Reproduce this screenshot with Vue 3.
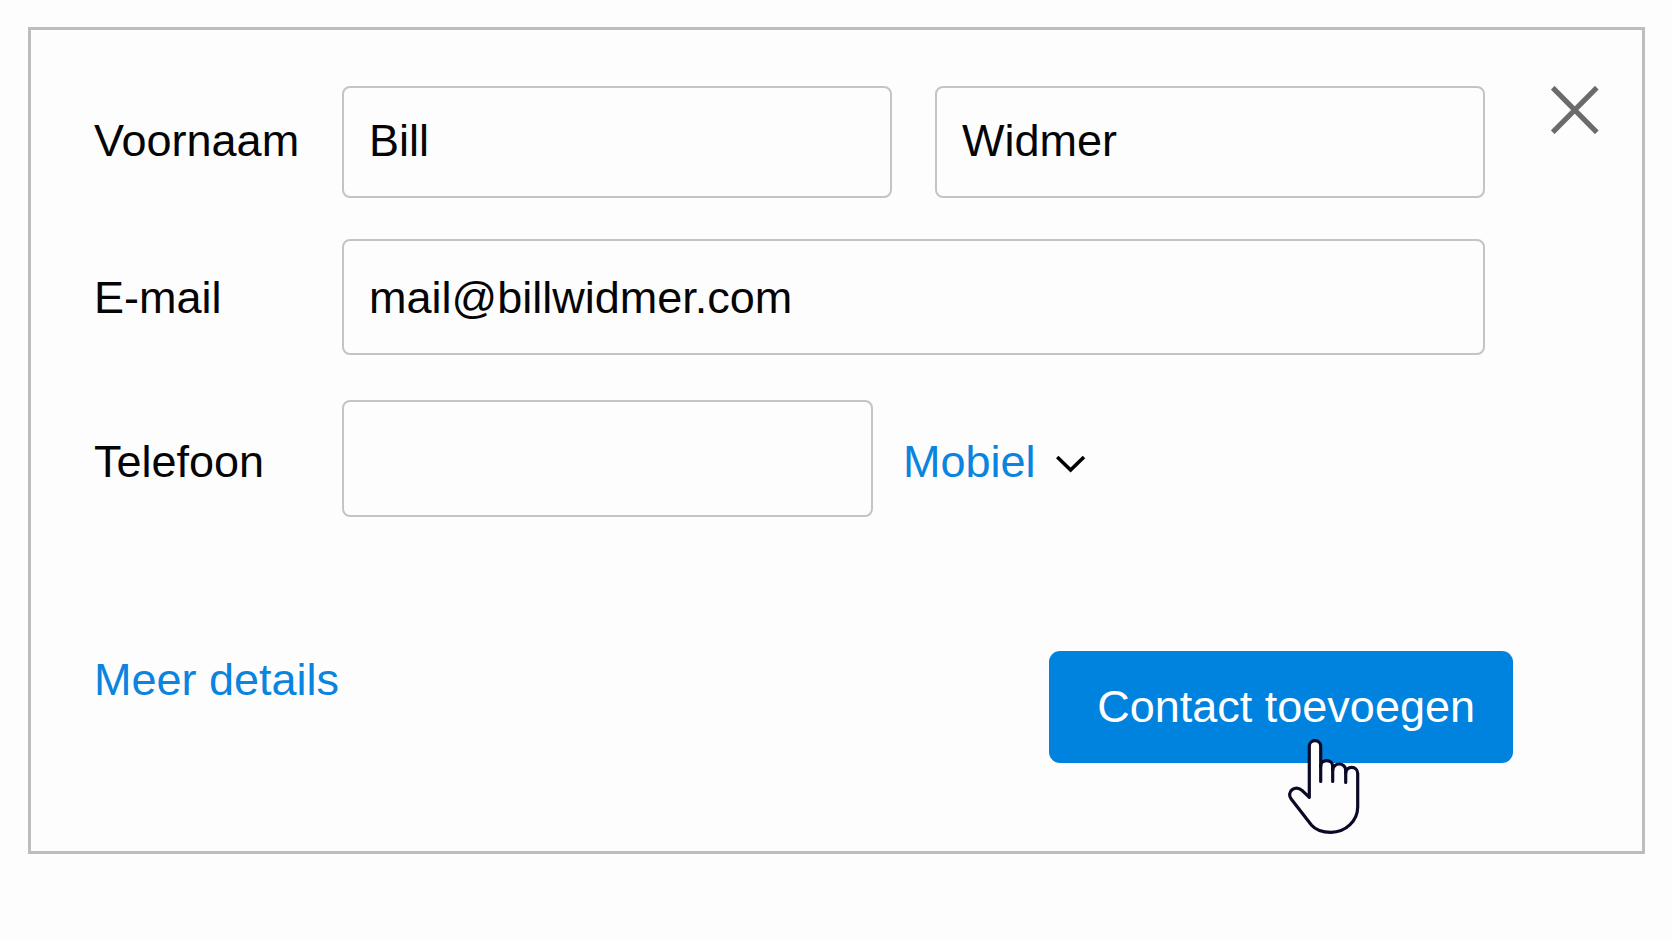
<script setup>
import { ref } from 'vue'

const firstName = ref('Bill')
const lastName = ref('Widmer')
const email = ref('mail@billwidmer.com')
const phone = ref('')
const phoneType = ref('mobiel')
</script>

<template>
  <main class="page">
    <section class="card">
      <form class="form" @submit.prevent>
        <div class="row row-name">
          <label class="label" for="first-name">Voornaam</label>
          <div class="fields">
            <input id="first-name" v-model="firstName" class="input" type="text" />
            <input v-model="lastName" class="input" type="text" aria-label="Achternaam" />
          </div>
        </div>

        <div class="row row-email">
          <label class="label" for="email">E-mail</label>
          <div class="fields">
            <input id="email" v-model="email" class="input" type="email" />
          </div>
        </div>

        <div class="row row-phone">
          <label class="label" for="phone">Telefoon</label>
          <div class="fields">
            <input id="phone" v-model="phone" class="input phone" type="tel" />
            <div class="type">
              <select v-model="phoneType" class="select" aria-label="Type telefoon">
                <option value="mobiel">Mobiel</option>
              </select>
              <svg class="chevron" width="30" height="22" viewBox="0 0 30 22" aria-hidden="true">
                <path d="M1.2 6 L14.6 19 L28 6" fill="none" stroke="#000" stroke-width="3.6" />
              </svg>
            </div>
          </div>
        </div>

        <footer class="footer">
          <a class="more" href="#">Meer details</a>
          <div class="action">
            <button class="submit" type="submit">Contact toevoegen</button>
            <svg class="hand" width="74" height="98" viewBox="0 0 74 98" aria-hidden="true">
              <path
                d="M22.3 59.3 V8.4 A5.7 5.7 0 0 1 33.7 8.4 V28.5 C33.7 25 36.5 22.7 39.7 22.7 C43 22.7 45.7 25 45.7 28.5 V32 C45.7 28.5 48.7 26 52.2 26 C55.7 26 58.7 28.5 58.7 32 V35 C58.7 31.8 61.4 29.4 64.7 29.4 C68 29.4 70.7 31.8 70.7 35.5 V69 C70.7 83 58.5 94.3 44 94.3 C36 94.3 29 92.5 24.4 87 L4.2 61 C1.5 57.5 2.6 53.4 5.2 51.6 C8.4 49.4 12.2 50 15 52.4 Z"
                fill="#fdfdfd"
                stroke="#0b0a26"
                stroke-width="3.2"
                stroke-linejoin="round"
              />
              <path
                d="M33.7 27 V43.5 M45.7 29 V43.5 M58.7 33 V44.5"
                fill="none"
                stroke="#0b0a26"
                stroke-width="3.2"
                stroke-linecap="round"
              />
            </svg>
          </div>
        </footer>
      </form>

      <button class="close" type="button" aria-label="Sluiten">
        <svg width="48" height="48" viewBox="0 0 48 48" aria-hidden="true">
          <path d="M1.7 1.7 L45.8 46.3 M45.8 1.7 L1.7 46.3" fill="none" stroke="#6b6b6b" stroke-width="5.2" />
        </svg>
      </button>
    </section>
  </main>
</template>

<style>
body {
  background: #fdfdfd;
}
</style>

<style scoped>
.page {
  padding: 27px 27px 27px 28px;
  font-family: 'Liberation Sans', Arial, sans-serif;
  font-size: 45px;
  line-height: 52px;
  color: #050505;
}

.page *,
.page {
  box-sizing: border-box;
}

.card {
  display: flex;
  align-items: flex-start;
  gap: 38px;
  padding: 56px 43px 88px 63px;
  border: 3px solid #bdbdbd;
}

.form {
  flex: 1;
  min-width: 0;
}

.row {
  display: grid;
  grid-template-columns: 248px minmax(0, 1fr);
  padding-right: 28px;
}

.row-name {
  height: 112px;
  margin-bottom: 41px;
}

.row-email {
  height: 116px;
  margin-bottom: 45px;
}

.row-phone {
  height: 117px;
}

.label {
  align-self: center;
}

.row-name .label,
.row-name .input {
  padding-bottom: 2px;
}

.row-email .label,
.row-email .input {
  padding-top: 2px;
}

.row-phone .label,
.row-phone .type {
  padding-top: 6px;
}

.fields {
  display: flex;
  gap: 43px;
}

.row-phone .fields {
  gap: 30px;
}

.input {
  flex: 1;
  min-width: 0;
  margin: 0;
  padding: 0 25px;
  border: 2px solid #c4c4c6;
  border-radius: 8px;
  outline: none;
  background: transparent;
  font: inherit;
  color: inherit;
}

.phone {
  flex: 0 1 531px;
}

.type {
  display: grid;
  align-items: center;
}

.select {
  grid-area: 1 / 1;
  margin: 0;
  padding: 0 50px 0 0;
  border: 0;
  appearance: none;
  background: transparent;
  font: inherit;
  color: #0a84de;
  cursor: pointer;
}

.chevron {
  grid-area: 1 / 1;
  justify-self: end;
  pointer-events: none;
}

.footer {
  display: flex;
  align-items: flex-start;
  justify-content: space-between;
  margin-top: 134px;
}

.more {
  padding-top: 3px;
  color: #0a84de;
  text-decoration: none;
}

.action {
  position: relative;
}

.submit {
  display: block;
  height: 112px;
  margin: 0;
  padding: 0 38px 0 48px;
  border: 0;
  border-radius: 11px;
  background: #0083de;
  font: inherit;
  color: #fff;
  cursor: pointer;
}

.hand {
  position: absolute;
  top: 87px;
  left: 238px;
  pointer-events: none;
}

.close {
  display: block;
  padding: 0;
  border: 0;
  background: none;
  cursor: pointer;
}

.close svg {
  display: block;
}
</style>
